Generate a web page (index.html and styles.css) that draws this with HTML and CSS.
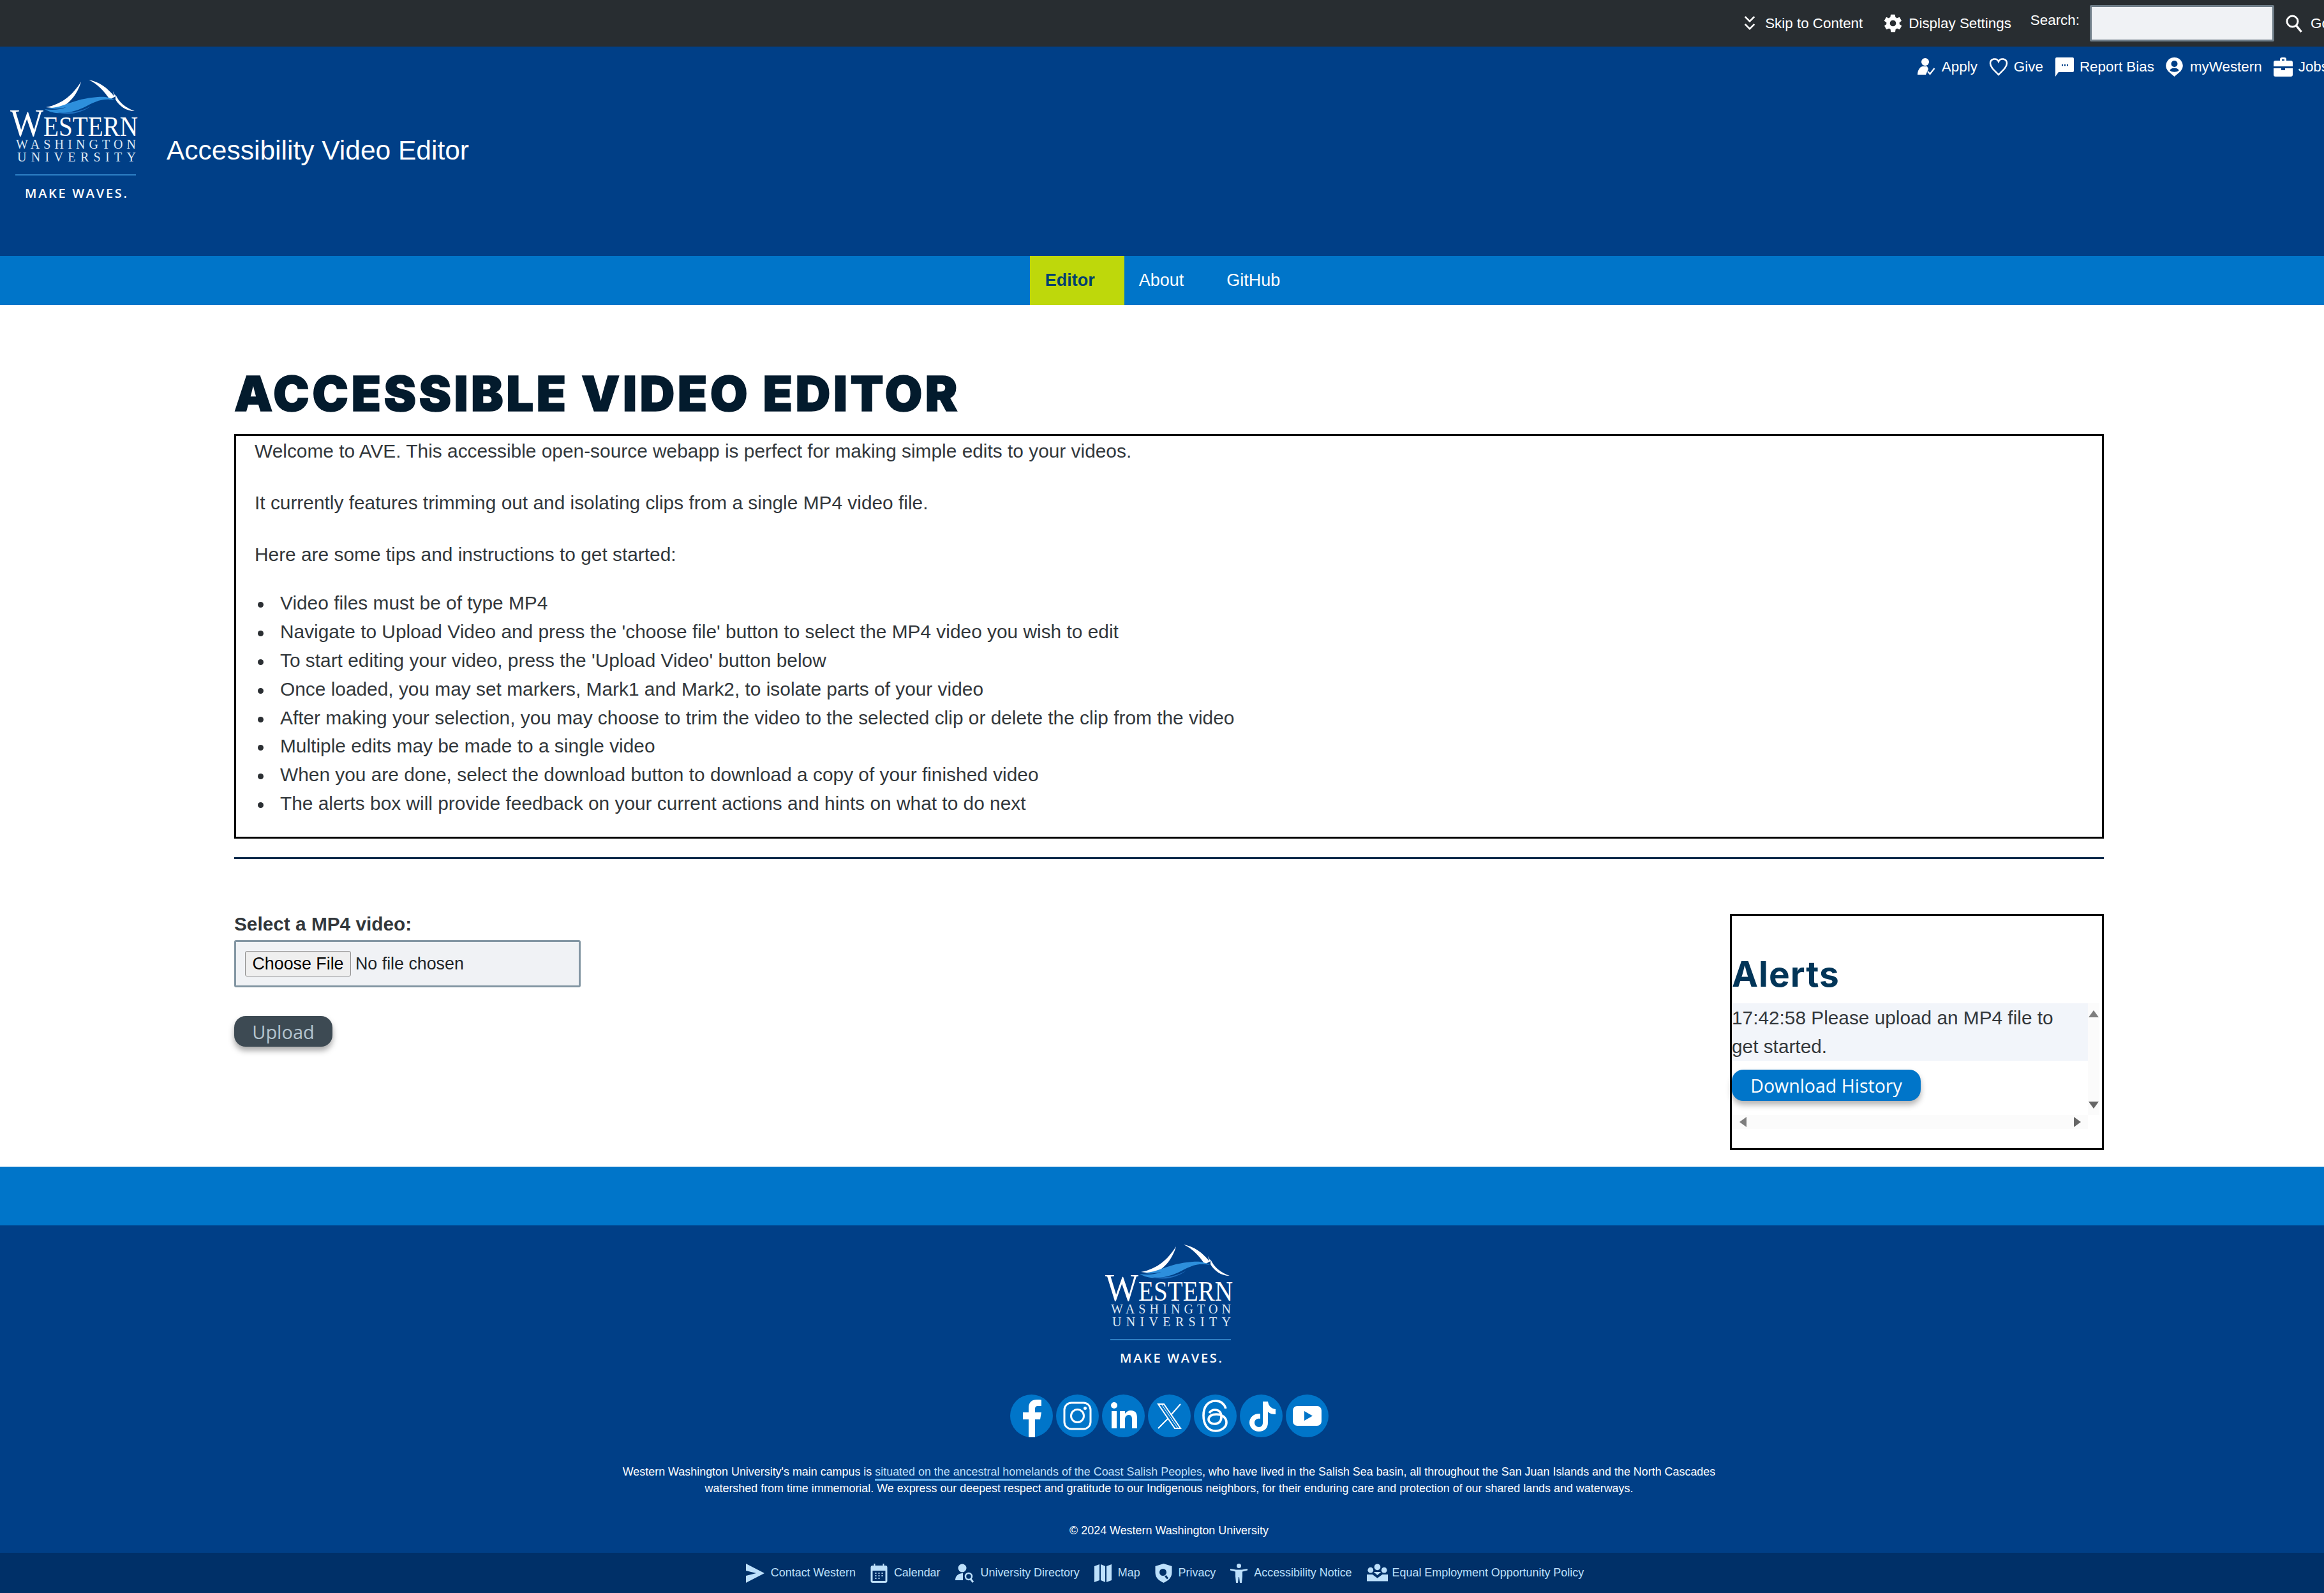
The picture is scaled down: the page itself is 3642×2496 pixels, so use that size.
FILE: index.html
```html
<!DOCTYPE html>
<html lang="en">
<head>
<meta charset="utf-8">
<title>Accessible Video Editor</title>
<link rel="stylesheet" href="styles.css">
</head>
<body>
<div class="page">
  <div class="topbar">
    <a class="tlink skip"><svg class="ico ic-chev" viewBox="0 0 22 28"><path d="M3 2l8 8 8-8M3 15l8 8 8-8" fill="none" stroke="#fff" stroke-width="3"/></svg>Skip to Content</a>
    <a class="tlink display"><svg class="ico ic-gear" viewBox="0 0 24 24"><path fill="#fff" fill-rule="evenodd" d="M19.4 13a7.6 7.6 0 000-2l2.1-1.6a.5.5 0 00.1-.7l-2-3.4a.5.5 0 00-.6-.2l-2.5 1a7.3 7.3 0 00-1.7-1l-.4-2.700a.5.5 0 00-.5-.4h-4a.5.5 0 00-.5.4l-.4 2.700a7.300 7.300 0 00-1.700 1l-2.500-1a.5.5 0 00-.6.2l-2 3.400a.5.5 0 00.1.7L4.600 11a7.600 7.600 0 000 2l-2.100 1.600a.5.5 0 00-.1.7l2 3.400a.5.5 0 00.6.2l2.500-1a7.300 7.300 0 001.700 1l.4 2.700a.5.5 0 00.5.4h4a.5.5 0 00.5-.4l.4-2.700a7.300 7.300 0 001.700-1l2.500 1a.5.5 0 00.6-.2l2-3.400a.5.5 0 00-.1-.7zM12 15.500a3.500 3.500 0 110-7 3.500 3.500 0 010 7z"/></svg>Display Settings</a>
    <label class="search-label" for="q">Search:</label>
    <input class="search-input" id="q" type="text">
    <a class="tlink go"><svg class="ico ic-mag" viewBox="0 0 28 30"><circle cx="11.500" cy="11.500" r="8.500" fill="none" stroke="#fff" stroke-width="3"/><path d="M17.500 18l8 10" stroke="#fff" stroke-width="3.500"/></svg>Go</a>
  </div>

  <header class="masthead">
    <div class="util">
      <a class="ulink"><svg class="ico ic-u" viewBox="0 0 30 30"><circle cx="13" cy="7" r="6" fill="#fff"/><path fill="#fff" d="M9 14h7l2 4-4 9H1c0-6 3-12 8-13z"/><path d="M17 22l3.500 4 7-9" fill="none" stroke="#fff" stroke-width="2.200"/></svg>Apply</a>
      <a class="ulink"><svg class="ico ic-u" viewBox="0 0 30 30"><path d="M15 27C8 20 2 15 2 9a6.800 6.800 0 0113-2.500A6.800 6.800 0 0128 9c0 6-6 11-13 18z" fill="none" stroke="#fff" stroke-width="2.500"/></svg>Give</a>
      <a class="ulink"><svg class="ico ic-u" viewBox="0 0 30 30"><path fill="#fff" d="M3 0h25a2 2 0 012 2v19a2 2 0 01-2 2H6l-5 7V2a2 2 0 012-2z"/><path d="M11 12h2M15 12h2M19 12h2" stroke="#003f87" stroke-width="2.500"/></svg>Report Bias</a>
      <a class="ulink"><svg class="ico ic-u2" viewBox="0 0 27 30"><path fill="#fff" fill-rule="evenodd" d="M13.500 0a13 13 0 0110 21.500L13.500 30 3.500 21.500A13 13 0 0113.500 0zm0 5a5 5 0 100 10 5 5 0 000-10zm-7 15.500c3.500 3 10.500 3 14 0-1-3-3.500-4-7-4s-6 1-7 4z"/></svg>myWestern</a>
      <a class="ulink"><svg class="ico ic-u" viewBox="0 0 30 30"><path fill="#fff" d="M10 5V3a3 3 0 013-3h4a3 3 0 013 3v2h7a3 3 0 013 3v6H0V8a3 3 0 013-3zm3 0h4V3h-4zM0 17h12v3h6v-3h12v10a3 3 0 01-3 3H3a3 3 0 01-3-3z"/></svg>Jobs</a>
    </div>
    <div class="brand">
      <svg class="logo" viewBox="0 0 202 185">
        <path fill="#fff" d="M57 43C84 38 100 22 112 3 106 24 92 40 76 45z"/>
        <path fill="#fff" d="M124 0c16 3 30 13 40 26l-2-8 4 8-9 5C148 17 138 7 124 0z"/>
        <path fill="#fff" d="M166 23c5 12 16 21 30 26-14 0-24-8-30-18z"/>
        <path fill="#2d8fdc" d="M58 44c24 2 38-14 80-17 12-1 20 1 27 5-20-4-30 2-50 12-20 9-44 12-60 2 12 2 24 1 34-3-12 3-24 3-31 1z"/>
        <path fill="#1f6fbf" d="M72 50c20 4 40 0 56-9-14 10-34 17-56 9z"/>
        <text class="lg-w" x="1" y="88" textLength="200" lengthAdjust="spacingAndGlyphs"><tspan class="lg-big">W</tspan>ESTERN</text>
        <text class="lg-s" x="10" y="108" textLength="188">WASHINGTON</text>
        <text class="lg-s" x="12" y="128" textLength="186">UNIVERSITY</text>
        <rect x="9" y="148" width="189" height="2" fill="#2d7fc4"/>
        <text class="lg-m" x="24" y="185" textLength="160">MAKE WAVES.</text>
      </svg>
      <div class="site-title">Accessibility Video Editor</div>
    </div>
  </header>

  <nav class="mainnav">
    <a class="nav-item active">Editor</a>
    <a class="nav-item">About</a>
    <a class="nav-item">GitHub</a>
  </nav>

  <main class="main">
    <h1 class="page-title">ACCESSIBLE VIDEO EDITOR</h1>
    <section class="intro">
      <p>Welcome to AVE. This accessible open-source webapp is perfect for making simple edits to your videos.</p>
      <p>It currently features trimming out and isolating clips from a single MP4 video file.</p>
      <p>Here are some tips and instructions to get started:</p>
      <ul>
        <li>Video files must be of type MP4</li>
        <li>Navigate to Upload Video and press the 'choose file' button to select the MP4 video you wish to edit</li>
        <li>To start editing your video, press the 'Upload Video' button below</li>
        <li>Once loaded, you may set markers, Mark1 and Mark2, to isolate parts of your video</li>
        <li>After making your selection, you may choose to trim the video to the selected clip or delete the clip from the video</li>
        <li>Multiple edits may be made to a single video</li>
        <li>When you are done, select the download button to download a copy of your finished video</li>
        <li>The alerts box will provide feedback on your current actions and hints on what to do next</li>
      </ul>
    </section>
    <hr class="rule">
    <div class="workspace">
      <form class="upload">
        <label class="file-label">Select a MP4 video:</label>
        <div class="file-box"><span class="file-btn">Choose File</span><span class="file-name">No file chosen</span></div>
        <button class="btn btn-upload" type="button">Upload</button>
      </form>
      <aside class="alerts">
        <h2 class="alerts-title">Alerts</h2>
        <div class="alerts-scroll">
          <div class="alerts-body">
            <div class="alert-msg">17:42:58 Please upload an MP4 file to get started.</div>
            <button class="btn btn-history" type="button">Download History</button>
          </div>
          <div class="vbar"><i class="arr up"></i><i class="arr down"></i></div>
          <div class="hbar"><i class="arr left"></i><i class="arr right"></i></div>
        </div>
      </aside>
    </div>
  </main>

  <div class="band"></div>

  <footer class="footer">
    <svg class="logo" viewBox="0 0 202 185">
      <path fill="#fff" d="M57 43C84 38 100 22 112 3 106 24 92 40 76 45z"/>
      <path fill="#fff" d="M124 0c16 3 30 13 40 26l-2-8 4 8-9 5C148 17 138 7 124 0z"/>
      <path fill="#fff" d="M166 23c5 12 16 21 30 26-14 0-24-8-30-18z"/>
      <path fill="#2d8fdc" d="M58 44c24 2 38-14 80-17 12-1 20 1 27 5-20-4-30 2-50 12-20 9-44 12-60 2 12 2 24 1 34-3-12 3-24 3-31 1z"/>
      <path fill="#1f6fbf" d="M72 50c20 4 40 0 56-9-14 10-34 17-56 9z"/>
      <text class="lg-w" x="1" y="88" textLength="200" lengthAdjust="spacingAndGlyphs"><tspan class="lg-big">W</tspan>ESTERN</text>
      <text class="lg-s" x="10" y="108" textLength="188">WASHINGTON</text>
      <text class="lg-s" x="12" y="128" textLength="186">UNIVERSITY</text>
      <rect x="9" y="148" width="189" height="2" fill="#2d7fc4"/>
      <text class="lg-m" x="24" y="185" textLength="160">MAKE WAVES.</text>
    </svg>
    <div class="social">
      <a class="soc"><svg viewBox="0 0 67 67"><path fill="#fff" d="M29 67V39H20V28h9v-7c0-9 5-13 13-13 3 0 6 0 7 .5V18h-5c-4 0-5 2-5 5v5h10l-2 11h-8v28z"/></svg></a>
      <a class="soc"><svg viewBox="0 0 67 67"><rect x="13" y="13" width="41" height="41" rx="11" fill="none" stroke="#fff" stroke-width="3"/><circle cx="33.500" cy="33.500" r="10" fill="none" stroke="#fff" stroke-width="3"/><circle cx="45.500" cy="21.500" r="2.500" fill="#fff"/></svg></a>
      <a class="soc"><svg viewBox="0 0 67 67"><circle cx="19" cy="17" r="5" fill="#fff"/><rect x="15" y="26" width="8" height="27" fill="#fff"/><path fill="#fff" d="M28 26h8v4c2-3 5-5 9-5 8 0 10 5 10 12v16h-8V39c0-4-1-7-5-7s-6 3-6 7v14h-8z"/></svg></a>
      <a class="soc"><svg viewBox="0 0 67 67"><path d="M16 15h9l26 38h-9zM51 15L36 32M31 38L16 53" fill="none" stroke="#fff" stroke-width="2"/><path d="M21 15l26 38" stroke="#fff" stroke-width="1"/></svg></a>
      <a class="soc"><svg viewBox="0 0 67 67"><path d="M50 22C47 13 41 10 34 10 22 10 15 19 15 33s7 24 19 24c9 0 17-6 17-13 0-8-7-13-16-13-7 0-12 3-12 8 0 4 4 7 9 7 7 0 11-4 11-11 0-6-3-11-10-11-4 0-7 2-9 5" fill="none" stroke="#fff" stroke-width="3.600"/></svg></a>
      <a class="soc"><svg viewBox="0 0 67 67"><path fill="#fff" d="M36 11h8c1 7 5 11 12 12v8c-5 0-9-1-12-4v17c0 9-6 14-14 14-9 0-15-7-15-14 0-9 8-15 17-14v8c-5-1-9 2-9 6 0 4 3 7 7 7s6-3 6-7z"/></svg></a>
      <a class="soc"><svg viewBox="0 0 67 67"><rect x="11" y="18" width="45" height="31" rx="7" fill="#fff"/><path fill="#0075c9" d="M29 26l13 7.500L29 41z"/></svg></a>
    </div>
    <p class="ack">Western Washington University's main campus is <a class="ack-link">situated on the ancestral homelands of the Coast Salish Peoples</a>, who have lived in the Salish Sea basin, all throughout the San Juan Islands and the North Cascades<br>watershed from time immemorial. We express our deepest respect and gratitude to our Indigenous neighbors, for their enduring care and protection of our shared lands and waterways.</p>
    <p class="copy">© 2024 Western Washington University</p>
  </footer>

  <div class="bottombar">
    <a class="blink"><svg class="ico ic-b" viewBox="0 0 30 30"><path fill="#bde0fb" d="M1 0l29 15L1 30v-11l16-4L1 11z"/></svg>Contact Western</a>
    <a class="blink"><svg class="ico ic-b2" viewBox="0 0 26 30"><path fill="#bde0fb" fill-rule="evenodd" d="M5 0h2v3h12V0h2v3h2a3 3 0 013 3v21a3 3 0 01-3 3H3a3 3 0 01-3-3V6a3 3 0 013-3h2zM3 11v16h20V11z"/><path d="M7 15h2M12 15h2M17 15h2M7 19h2M12 19h2M17 19h2M7 23h2M12 23h2" stroke="#bde0fb" stroke-width="2"/></svg>Calendar</a>
    <a class="blink"><svg class="ico ic-b" viewBox="0 0 30 30"><circle cx="11" cy="7" r="6.500" fill="#bde0fb"/><path fill="#bde0fb" d="M0 26c0-7 5-11 12-11v11z"/><circle cx="21" cy="20" r="5" fill="none" stroke="#bde0fb" stroke-width="2.500"/><path d="M24 24l4 5" stroke="#bde0fb" stroke-width="3"/></svg>University Directory</a>
    <a class="blink"><svg class="ico ic-b2" viewBox="0 0 27 30"><path fill="#bde0fb" d="M0 4l8-3v25l-8 3zM10 1l7 3v25l-7-3zM19 4l8-3v25l-8 3z"/></svg>Map</a>
    <a class="blink"><svg class="ico ic-b2" viewBox="0 0 26 30"><path fill="#bde0fb" fill-rule="evenodd" d="M13 0l13 4v10c0 8-6 13-13 16C6 27 0 22 0 14V4zm-1 8a5.500 5.500 0 100 11 5.500 5.500 0 000-11zm5 10l-2.500 2 4 4.500 2-2z"/></svg>Privacy</a>
    <a class="blink"><svg class="ico ic-b2" viewBox="0 0 27 30"><circle cx="13.500" cy="3.500" r="3.500" fill="#bde0fb"/><path fill="#bde0fb" d="M0 8l9 1.500h9L27 8v2.500l-8 2V20l-1 10h-3l-1-9h-1l-1 9H9L8 20v-7.500l-8-2z"/></svg>Accessibility Notice</a>
    <a class="blink"><svg class="ico ic-b3" viewBox="0 0 34 30"><circle cx="17" cy="5" r="5" fill="#bde0fb"/><circle cx="6" cy="10" r="4.500" fill="#bde0fb"/><circle cx="28" cy="10" r="4.500" fill="#bde0fb"/><path fill="#bde0fb" d="M0 17h9l8 6 8-6h9v11H0zM11 13h12l-6 5z"/></svg>Equal Employment Opportunity Policy</a>
  </div>
</div>
</body>
</html>
```
FILE: styles.css
```css
html, body { margin: 0; padding: 0; overflow: hidden; background: #fff; }
body { font-family: "Liberation Sans", Arial, sans-serif; color: #32373b; }
a { color: inherit; text-decoration: none; }
.page { width: 3664px; }
.ico { flex: none; display: block; }

.topbar { height: 73px; background: #282d31; color: #fff; display: flex; align-items: center; justify-content: flex-end; font-size: 22.4px; box-sizing: border-box; }
.tlink { display: flex; align-items: center; }
.ic-chev { width: 20px; height: 26px; margin-right: 14px; }
.ic-gear { width: 33px; height: 33px; margin-right: 8px; }
.ic-mag { width: 28px; height: 30px; margin-right: 12px; }
.skip { margin-right: 31px; }
.display { margin-right: 30px; }
.search-label { margin-right: 16px; margin-top: -9px; }
.search-input { width: 289px; height: 57px; box-sizing: border-box; border: 3px solid #6f7d88; background: #f0f2f5; border-radius: 2px; margin: 0 17px 0 0; padding: 0; }
.go { width: 83px; overflow: hidden; white-space: nowrap; }

.masthead { height: 328px; background: #003f87; color: #fff; display: flex; flex-direction: column; box-sizing: border-box; padding-top: 15px; }
.util { display: flex; justify-content: flex-end; align-items: center; font-size: 22.4px; height: 34px; padding-right: 15px; }
.ulink { display: flex; align-items: center; margin-left: 18px; }
.ic-u { width: 30px; height: 30px; margin-right: 9px; }
.ic-u2 { width: 27px; height: 30px; margin-right: 11px; }
.brand { display: flex; align-items: center; padding: 3px 0 0 15px; }
.logo { display: block; width: 202px; height: 185px; flex: none; overflow: visible; }
.lg-w { font-family: "Liberation Serif", serif; font-size: 44px; fill: #fff; }
.lg-big { font-size: 62px; }
.lg-s { font-family: "Liberation Serif", serif; font-size: 20px; fill: #dfe9f5; }
.lg-m { font-family: "Open Sans", sans-serif; font-size: 20px; font-weight: 600; fill: #fff; }
.site-title { font-size: 42.5px; margin-left: 44px; margin-top: 37px; }

.mainnav { height: 77px; background: #0075c9; display: flex; justify-content: center; color: #fff; font-size: 27px; }
.nav-item { display: flex; align-items: center; padding: 0 44px 0 23px; }
.nav-item.active { background: #bed80b; color: #00406f; font-weight: 700; padding: 0 46px 0 24px; }

.main { height: 1350px; box-sizing: border-box; padding: 84px 367px 0; }
.page-title { margin: 0 0 9px; font-family: Inter, sans-serif; font-weight: 900; font-size: 76px; line-height: 109px; color: #031b2d; letter-spacing: 4.4px; -webkit-text-stroke: 1.5px #031b2d; white-space: nowrap; }
.intro { border: 3px solid #000; height: 634px; box-sizing: border-box; padding: 2px 29px 0; font-size: 29.87px; line-height: 44.8px; }
.intro p { margin: 0 0 36px; }
.intro ul { margin: -4px 0 0; padding-left: 40px; list-style: none; }
.intro li { position: relative; }
.intro li::before { content: ""; position: absolute; left: -35px; top: 20px; width: 9px; height: 9px; border-radius: 50%; background: #2b2f33; }
.rule { border: 0; height: 3px; background: #0b2a4a; margin: 29px 0 0; }
.workspace { display: flex; justify-content: space-between; align-items: flex-start; margin-top: 86px; }
.upload { display: flex; flex-direction: column; align-items: flex-start; }
.file-label { font-weight: 700; font-size: 29.8px; line-height: 36px; margin-bottom: 7px; margin-top: -2px; }
.file-box { width: 543px; height: 74px; box-sizing: border-box; border: 3px solid #8396a3; background: #f0f2f5; border-radius: 3px; display: flex; align-items: center; padding-left: 14px; font-size: 26.8px; color: #202428; }
.file-btn { width: 166px; height: 40px; box-sizing: border-box; border: 1px solid #8f8f8f; background: #efefef; border-radius: 3px; display: flex; align-items: center; justify-content: center; color: #000; margin-right: 7px; }
.btn { border: 0; font-family: "Open Sans", sans-serif; border-radius: 18px; display: block; padding: 0; }
.btn-upload { width: 154px; height: 48px; background: #3d4a53; color: #b4c4cf; font-size: 29px; margin-top: 45px; box-shadow: 0 6px 10px rgba(0,0,0,.35); }
.alerts { width: 586px; height: 370px; box-sizing: border-box; border: 3px solid #000; padding-top: 57px; padding-left: 0; }
.alerts-title { margin: 0 0 12px; font-family: Inter, sans-serif; font-weight: 700; font-size: 55px; line-height: 68px; color: #023558; letter-spacing: 1px; }
.alerts-scroll { display: grid; grid-template-columns: 558px 18px; grid-template-rows: 175px 22px; width: 576px; }
.alert-msg { background: #f2f5fa; font-size: 29.8px; line-height: 45px; padding-right: 40px; }
.btn-history { width: 296px; height: 49px; background: #0075c9; color: #fff; font-size: 28.5px; margin-top: 14px; box-shadow: 0 6px 10px rgba(0,0,0,.3); }
.vbar { background: #fbfbfb; display: flex; flex-direction: column; justify-content: space-between; align-items: center; padding: 11px 0 10px; box-sizing: border-box; }
.hbar { background: #fbfbfb; display: flex; justify-content: space-between; align-items: center; padding: 0 11px 0 12px; }
.arr { display: block; width: 0; height: 0; border: 8px solid transparent; }
.arr.up { border-bottom: 11px solid #7e7e7e; border-top: 0; }
.arr.down { border-top: 11px solid #666; border-bottom: 0; }
.arr.left { border-right: 11px solid #7e7e7e; border-left: 0; }
.arr.right { border-left: 11px solid #666; border-right: 0; }

.band { height: 92px; background: #0075c9; }
.footer { height: 513px; background: #003f87; color: #fff; display: flex; flex-direction: column; align-items: center; box-sizing: border-box; padding-top: 30px; }
.social { display: flex; gap: 5px; margin-top: 50px; }
.soc { width: 67px; height: 67px; border-radius: 50%; background: #0075c9; display: block; }
.soc svg { display: block; width: 67px; height: 67px; overflow: visible; }
.ack { margin: 41px 0 0; font-size: 17.92px; line-height: 26px; text-align: center; white-space: nowrap; }
.ack-link { color: #bfe0fa; border-bottom: 3px solid #6db8f0; padding-bottom: 1px; }
.copy { margin: 40px 0 0; font-size: 17.92px; line-height: 26px; }
.bottombar { height: 63px; background: #003068; color: #bde0fb; display: flex; justify-content: center; align-items: center; font-size: 17.92px; gap: 23px; padding-right: 14px; }
.blink { display: flex; align-items: center; }
.ic-b { width: 30px; height: 30px; margin-right: 10px; }
.ic-b2 { width: 27px; height: 30px; margin-right: 10px; }
.ic-b3 { width: 33px; height: 30px; margin-right: 7px; }
```
